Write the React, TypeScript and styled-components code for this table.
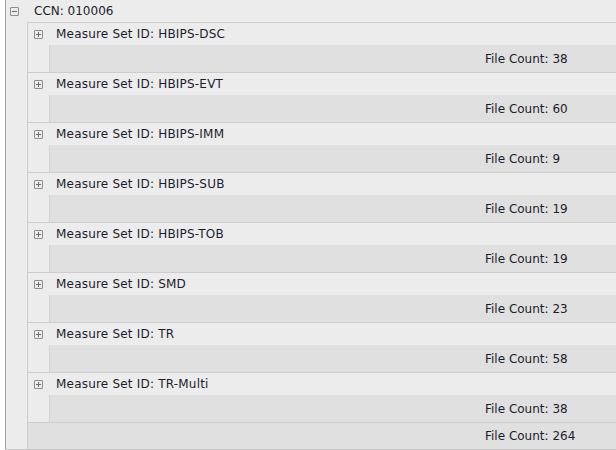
import React from "react";
import styled, { createGlobalStyle } from "styled-components";

const Global = createGlobalStyle`
  html, body { margin: 0; padding: 0; background: #ffffff; }
  body { font-family: Tahoma, "DejaVu Sans", Verdana, sans-serif; font-size: 12px; color: #1c1c2c; }
`;

const Panel = styled.div`
  margin-left: 5px;
  width: 611px;
  height: 449px;
  border-left: 1px solid #a3a3a3;
  border-bottom: 1px solid #c8c8c8;
  background: #ececec;
  overflow: hidden;
  display: flex;
  flex-direction: column;
`;

const HeaderRow = styled.div<{ $indent: number; $gap: number }>`
  height: 22px;
  display: flex;
  align-items: center;
  padding-left: ${(p) => p.$indent}px;
  gap: ${(p) => p.$gap}px;
  white-space: nowrap;
`;

const Label = styled.span<{ $spacing?: number }>`
  letter-spacing: ${(p) => p.$spacing ?? 0}px;
`;

const ToggleBox = styled.span`
  width: 9px;
  height: 9px;
  box-sizing: border-box;
  border: 1px solid #8e8e8e;
  border-radius: 1px;
  position: relative;
  flex: none;
  &::before {
    content: "";
    position: absolute;
    left: 1px;
    right: 1px;
    top: 3px;
    height: 1px;
    background: #6e6e6e;
  }
`;

const PlusBox = styled(ToggleBox)`
  &::after {
    content: "";
    position: absolute;
    top: 1px;
    bottom: 1px;
    left: 3px;
    width: 1px;
    background: #6e6e6e;
  }
`;

const Children = styled.div`
  margin-left: 21px;
  border-left: 1px solid #cdcdcd;
  border-top: 1px solid #cdcdcd;
  display: flex;
  flex-direction: column;
  flex: 1;
`;

const Group = styled.div`
  display: flex;
  flex-direction: column;
  border-bottom: 1px solid #cdcdcd;
`;

const CountRow = styled.div<{ $height: number; $indent: number }>`
  height: ${(p) => p.$height}px;
  margin-left: ${(p) => p.$indent}px;
  border-left: ${(p) => (p.$indent > 0 ? "1px solid #d2d2d2" : "none")};
  background: #e0e0e0;
  display: grid;
  grid-template-columns: 1fr 132px;
  align-items: center;
`;

const CountText = styled.span`
  grid-column: 2;
  white-space: nowrap;
`;

const groups = [
  { id: "HBIPS-DSC", count: 38 },
  { id: "HBIPS-EVT", count: 60 },
  { id: "HBIPS-IMM", count: 9 },
  { id: "HBIPS-SUB", count: 19 },
  { id: "HBIPS-TOB", count: 19 },
  { id: "SMD", count: 23 },
  { id: "TR", count: 58 },
  { id: "TR-Multi", count: 38 },
];

export default function App() {
  return (
    <>
      <Global />
      <Panel>
        <HeaderRow $indent={4} $gap={15}>
          <ToggleBox />
          <Label>CCN: 010006</Label>
        </HeaderRow>
        <Children>
          {groups.map((g) => (
            <Group key={g.id}>
              <HeaderRow $indent={6} $gap={13}>
                <PlusBox />
                <Label $spacing={0.2}>Measure Set ID: {g.id}</Label>
              </HeaderRow>
              <CountRow $height={27} $indent={21}>
                <CountText>File Count: {g.count}</CountText>
              </CountRow>
            </Group>
          ))}
          <CountRow $height={26} $indent={0}>
            <CountText>File Count: 264</CountText>
          </CountRow>
        </Children>
      </Panel>
    </>
  );
}
